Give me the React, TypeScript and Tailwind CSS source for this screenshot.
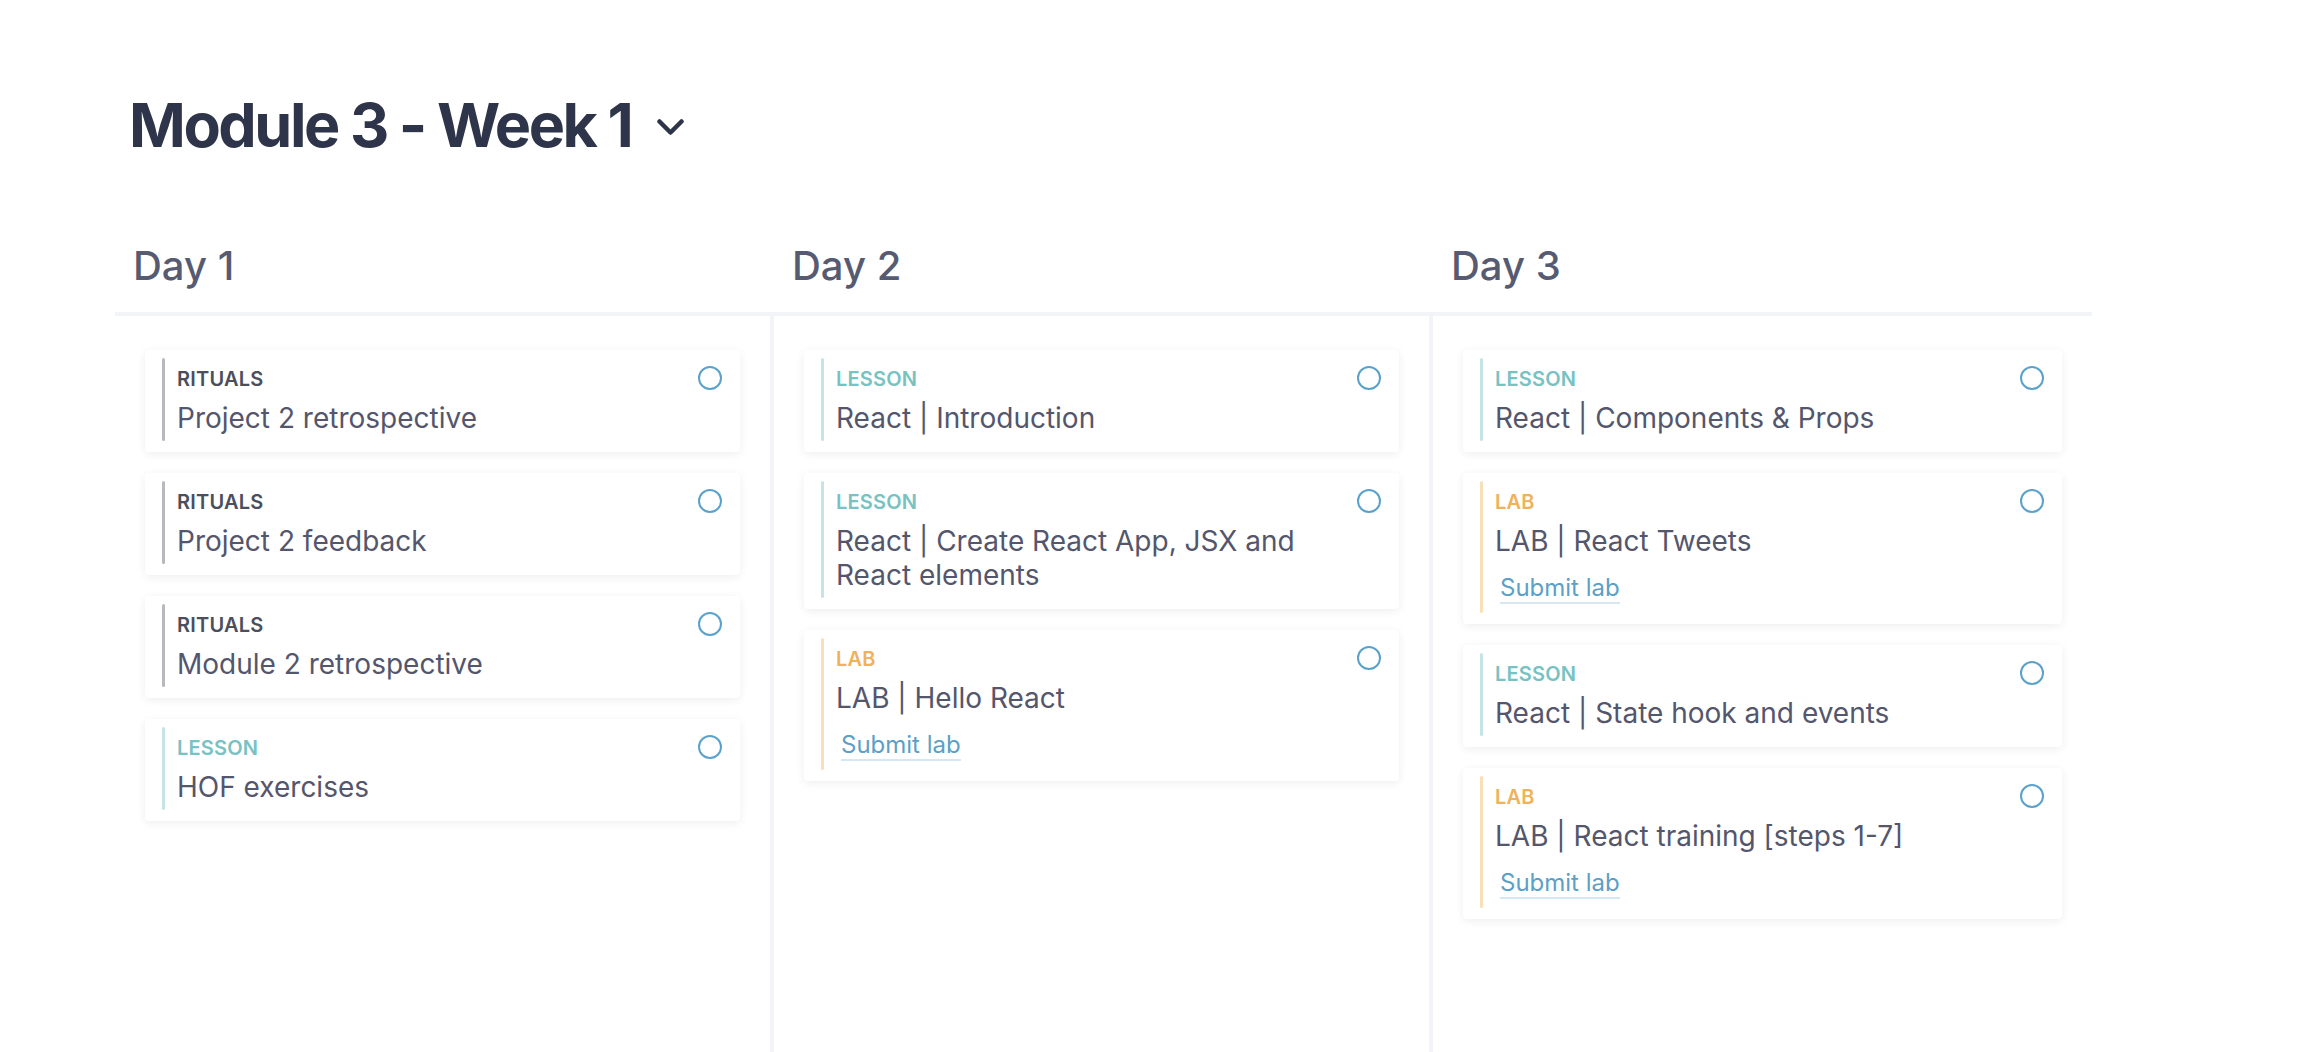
import React from 'react'

type Kind = 'rituals' | 'lesson' | 'lab'

interface Item {
  kind: Kind
  title: string
  submit?: boolean
}

const days: { name: string; items: Item[] }[] = [
  {
    name: 'Day 1',
    items: [
      { kind: 'rituals', title: 'Project 2 retrospective' },
      { kind: 'rituals', title: 'Project 2 feedback' },
      { kind: 'rituals', title: 'Module 2 retrospective' },
      { kind: 'lesson', title: 'HOF exercises' },
    ],
  },
  {
    name: 'Day 2',
    items: [
      { kind: 'lesson', title: 'React | Introduction' },
      { kind: 'lesson', title: 'React | Create React App, JSX and React elements' },
      { kind: 'lab', title: 'LAB | Hello React', submit: true },
    ],
  },
  {
    name: 'Day 3',
    items: [
      { kind: 'lesson', title: 'React | Components & Props' },
      { kind: 'lab', title: 'LAB | React Tweets', submit: true },
      { kind: 'lesson', title: 'React | State hook and events' },
      { kind: 'lab', title: 'LAB | React training [steps 1-7]', submit: true },
    ],
  },
]

const kindStyle: Record<Kind, { label: string; text: string; bar: string }> = {
  rituals: { label: 'RITUALS', text: 'text-[#4b4e5c]', bar: 'bg-[#b8b9bd]' },
  lesson: { label: 'LESSON', text: 'text-[#78c2c2]', bar: 'bg-[#c6e3e5]' },
  lab: { label: 'LAB', text: 'text-[#efb25b]', bar: 'bg-[#f7dfb8]' },
}

function Card({ item }: { item: Item }) {
  const s = kindStyle[item.kind]
  return (
    <div className="flex items-start bg-white rounded-[4px] shadow-[0_2px_10px_rgba(0,0,0,0.07)] pt-2 pb-[11px] pl-[17px] pr-[18px]">
      <div className="flex self-stretch flex-1">
        <div className={`w-[3px] shrink-0 rounded-full ${s.bar}`} />
        <div className="flex-1 pl-[12px] pt-[9px] pb-[6px]">
          <div className={`text-[20px] leading-[24px] font-semibold tracking-[0.01em] ${s.text}`}>{s.label}</div>
          <div className="mt-[10px] text-[28px] leading-[34px] text-[#53566c] pr-[40px]">{item.title}</div>
          {item.submit && (
            <div className="mt-[16px] mb-[3px] pl-[5px]">
              <span className="inline-block text-[24px] leading-[28px] text-[#5c9fc7] border-b-2 border-[#d5e7f2]">Submit lab</span>
            </div>
          )}
        </div>
      </div>
      <div className="mt-2 w-[24px] h-[24px] rounded-full border-2 border-[#5aa2cc] shrink-0" />
    </div>
  )
}

export default function App() {
  return (
    <div className="min-h-screen flex flex-col bg-white pl-[115px] font-['Inter',sans-serif]">
      <div className="flex items-center pt-[87px] pl-[14px]">
        <h1 className="text-[61px] leading-[76px] font-bold text-[#2e3449] tracking-[-0.04em]">Module 3 - Week 1</h1>
        <svg width="27" height="16" viewBox="0 0 27 16" className="ml-[26px] mt-[4px]">
          <polyline points="2.5,2.5 13.5,13.5 24.5,2.5" fill="none" stroke="#2e3449" strokeWidth="4.5" strokeLinecap="round" strokeLinejoin="round" />
        </svg>
      </div>

      <div className="flex-1 flex flex-col w-[1977px] mt-[78px]">
        <div className="flex border-b-4 border-[#f3f4f7]">
          {days.map((d) => (
            <div key={d.name} className="w-[659px] pl-[18px] pb-[21px] text-[40px] leading-[50px] font-medium text-[#575b72]">
              {d.name}
            </div>
          ))}
        </div>
        <div className="flex-1 flex">
          {days.map((d, i) => (
            <div
              key={d.name}
              className={`w-[659px] px-[30px] pt-[34px] flex flex-col gap-[21px] ${i < 2 ? 'border-r-4 border-[#f3f4f7]' : ''}`}
            >
              {d.items.map((it, j) => (
                <Card key={j} item={it} />
              ))}
            </div>
          ))}
        </div>
      </div>
    </div>
  )
}
